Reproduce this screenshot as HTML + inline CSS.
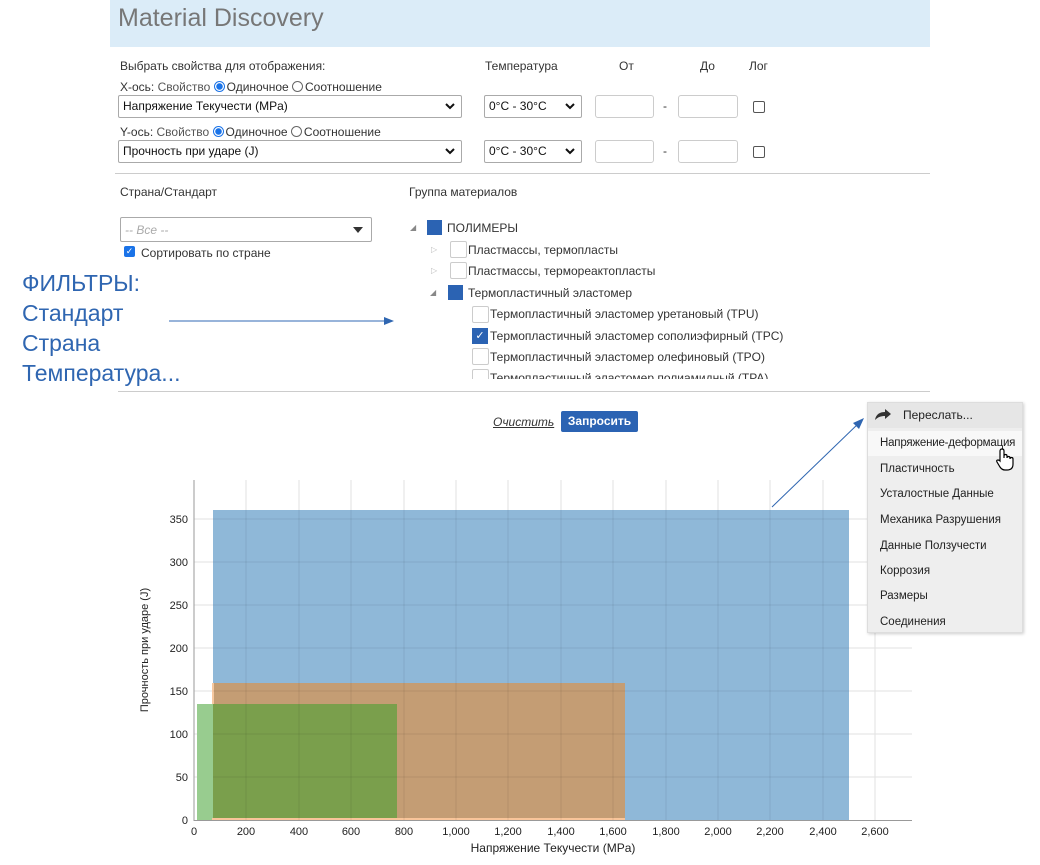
<!DOCTYPE html>
<html><head><meta charset="utf-8">
<style>
*{box-sizing:border-box;margin:0;padding:0}
body{width:1040px;height:865px;background:#fff;position:relative;overflow:hidden;font-family:"Liberation Sans","DejaVu Sans",sans-serif;color:#333;font-size:12px}
.a{position:absolute;white-space:nowrap}
.sel{position:absolute;border:1px solid #aaa;border-radius:2px;background:#fff;font-size:12px;color:#111;padding:3px 4px;height:23px}
.sel svg{position:absolute;right:6px;top:7px}
.inp{position:absolute;border:1px solid #ccc;border-radius:3px;background:#fff;height:23px}
.cb{position:absolute;width:12px;height:12px;border:1px solid #555;border-radius:2px;background:#fff}
.radio{display:inline-block;width:11px;height:11px;border-radius:50%;border:1px solid #666;vertical-align:-1px;margin-right:2px}
.radio.on{border:1px solid #1a73e8;background:radial-gradient(circle,#1a73e8 0 3px,#fff 3.5px)}
.tb{position:absolute;width:17px;height:17px;border:1px solid #ccc;border-radius:2px;background:#fff}
.tbf{position:absolute;width:15px;height:15px;background:#2b63b3}
.tri{position:absolute;font-size:8px;color:#888}
.mi{position:absolute;left:880px;font-size:11.5px;color:#222}
.blue{color:#2f66b1;font-size:23px}
</style></head><body>
<div class="a" style="left:110px;top:0;width:820px;height:47px;background:#dbecf8"></div>
<div class="a" style="left:118px;top:4px;font-size:25px;color:#777">Material Discovery</div>

<div class="a" style="left:120px;top:59px;color:#333">Выбрать свойства для отображения:</div>
<div class="a" style="left:485px;top:59px">Температура</div>
<div class="a" style="left:619px;top:59px">От</div>
<div class="a" style="left:700px;top:59px">До</div>
<div class="a" style="left:749px;top:59px">Лог</div>

<div class="a" style="left:120px;top:80px">X-ось: <span style="color:#555">Свойство</span> <span class="radio on"></span>Одиночное <span class="radio"></span>Соотношение</div>
<div class="sel" style="left:118px;top:95px;width:344px">Напряжение Текучести (MPa)<svg width="10" height="7"><path d="M1 1 L5 5 L9 1" stroke="#111" stroke-width="2" fill="none"/></svg></div>
<div class="sel" style="left:484px;top:95px;width:98px">0°C - 30°C<svg width="10" height="7"><path d="M1 1 L5 5 L9 1" stroke="#111" stroke-width="2" fill="none"/></svg></div>
<div class="inp" style="left:595px;top:95px;width:59px"></div>
<div class="a" style="left:663px;top:99px">-</div>
<div class="inp" style="left:678px;top:95px;width:60px"></div>
<div class="cb" style="left:753px;top:101px"></div>

<div class="a" style="left:120px;top:125px">Y-ось: <span style="color:#555">Свойство</span> <span class="radio on"></span>Одиночное <span class="radio"></span>Соотношение</div>
<div class="sel" style="left:118px;top:140px;width:344px">Прочность при ударе (J)<svg width="10" height="7"><path d="M1 1 L5 5 L9 1" stroke="#111" stroke-width="2" fill="none"/></svg></div>
<div class="sel" style="left:484px;top:140px;width:98px">0°C - 30°C<svg width="10" height="7"><path d="M1 1 L5 5 L9 1" stroke="#111" stroke-width="2" fill="none"/></svg></div>
<div class="inp" style="left:595px;top:140px;width:59px"></div>
<div class="a" style="left:663px;top:144px">-</div>
<div class="inp" style="left:678px;top:140px;width:60px"></div>
<div class="cb" style="left:753px;top:146px"></div>

<div class="a" style="left:115px;top:173px;width:815px;height:1px;background:#ccc"></div>
<div class="a" style="left:120px;top:185px">Страна/Стандарт</div>
<div class="a" style="left:409px;top:185px">Группа материалов</div>

<div class="sel" style="left:120px;top:217px;width:252px;height:25px;color:#aaa;font-style:italic;padding-top:5px">-- Все --<span style="position:absolute;right:8px;top:9px;width:0;height:0;border-left:5px solid transparent;border-right:5px solid transparent;border-top:6px solid #333"></span></div>
<div class="a" style="left:124px;top:246px;width:11px;height:11px;background:#1a73e8;border-radius:2px;color:#fff;font-size:9px;line-height:11px;text-align:center">✓</div>
<div class="a" style="left:141px;top:246px">Сортировать по стране</div>

<div class="a blue" style="left:22px;top:270px">ФИЛЬТРЫ:</div>
<div class="a blue" style="left:22px;top:300px">Стандарт</div>
<div class="a blue" style="left:22px;top:330px">Страна</div>
<div class="a blue" style="left:22px;top:360px">Температура...</div>

<div class="tri" style="left:410px;top:223px">◢</div>
<div class="tbf" style="left:427px;top:220px"></div>
<div class="a" style="left:447px;top:221px">ПОЛИМЕРЫ</div>
<div class="tri" style="left:431px;top:245px;color:#bbb">▷</div>
<div class="tb" style="left:450px;top:241px"></div>
<div class="a" style="left:468px;top:243px">Пластмассы, термопласты</div>
<div class="tri" style="left:431px;top:266px;color:#bbb">▷</div>
<div class="tb" style="left:450px;top:262px"></div>
<div class="a" style="left:468px;top:264px">Пластмассы, термореактопласты</div>
<div class="tri" style="left:430px;top:288px">◢</div>
<div class="tbf" style="left:448px;top:285px"></div>
<div class="a" style="left:468px;top:286px">Термопластичный эластомер</div>
<div class="tb" style="left:472px;top:306px"></div>
<div class="a" style="left:490px;top:307px">Термопластичный эластомер уретановый (TPU)</div>
<div class="a" style="left:472px;top:328px;width:16px;height:16px;background:#2b63b3;color:#fff;font-size:11px;text-align:center;line-height:16px">✓</div>
<div class="a" style="left:490px;top:329px">Термопластичный эластомер сополиэфирный (TPC)</div>
<div class="tb" style="left:472px;top:348px"></div>
<div class="a" style="left:490px;top:350px">Термопластичный эластомер олефиновый (TPO)</div>
<div class="a" style="left:472px;top:369px;height:10px;overflow:hidden;width:330px"><span class="tb" style="left:0;top:0;position:absolute"></span><span style="position:absolute;left:18px;top:2px">Термопластичный эластомер полиамидный (TPA)</span></div>

<div class="a" style="left:118px;top:391px;width:812px;height:1px;background:#ccc"></div>
<div class="a" style="left:493px;top:415px;font-style:italic;text-decoration:underline;color:#333">Очистить</div>
<div class="a" style="left:561px;top:411px;width:77px;height:21px;background:#2b63b3;color:#fff;font-weight:bold;font-size:12px;text-align:center;line-height:21px;border-radius:2px">Запросить</div>

<svg class="a" style="left:0;top:0" width="1040" height="865">
<line x1="169" y1="321" x2="386" y2="321" stroke="#5a86c4" stroke-width="1.2"/>
<polygon points="394,321 384,317 384,325" fill="#2f66b1"/>
<g stroke="#e2e2e2" stroke-width="1">
<line x1="246" y1="480" x2="246" y2="820"/><line x1="299" y1="480" x2="299" y2="820"/><line x1="351" y1="480" x2="351" y2="820"/><line x1="404" y1="480" x2="404" y2="820"/><line x1="456" y1="480" x2="456" y2="820"/><line x1="508" y1="480" x2="508" y2="820"/><line x1="561" y1="480" x2="561" y2="820"/><line x1="613" y1="480" x2="613" y2="820"/><line x1="666" y1="480" x2="666" y2="820"/><line x1="718" y1="480" x2="718" y2="820"/><line x1="770" y1="480" x2="770" y2="820"/><line x1="823" y1="480" x2="823" y2="820"/><line x1="875" y1="480" x2="875" y2="820"/>
<line x1="194" y1="519" x2="912" y2="519"/><line x1="194" y1="562" x2="912" y2="562"/><line x1="194" y1="605" x2="912" y2="605"/><line x1="194" y1="648" x2="912" y2="648"/><line x1="194" y1="691" x2="912" y2="691"/><line x1="194" y1="734" x2="912" y2="734"/><line x1="194" y1="777" x2="912" y2="777"/>
</g>
<rect x="213" y="510" width="636" height="310" fill="#8fb8d8"/>
<rect x="212" y="683" width="413" height="137" fill="#c49d74"/>
<rect x="212" y="683" width="2" height="137" fill="#f6c8a0"/>
<rect x="197" y="704" width="16" height="116" fill="#98cc8f"/>
<rect x="213" y="704" width="184" height="116" fill="#7a9f4c"/>
<rect x="212" y="818" width="413" height="3" fill="#f9c59a"/>
<g stroke="#000" stroke-opacity="0.08"><line x1="246" y1="510" x2="246" y2="820"/><line x1="299" y1="510" x2="299" y2="820"/><line x1="351" y1="510" x2="351" y2="820"/><line x1="404" y1="510" x2="404" y2="820"/><line x1="456" y1="510" x2="456" y2="820"/><line x1="508" y1="510" x2="508" y2="820"/><line x1="561" y1="510" x2="561" y2="820"/><line x1="613" y1="510" x2="613" y2="820"/><line x1="666" y1="510" x2="666" y2="820"/><line x1="718" y1="510" x2="718" y2="820"/><line x1="770" y1="510" x2="770" y2="820"/><line x1="823" y1="510" x2="823" y2="820"/>
<line x1="213" y1="519" x2="849" y2="519"/><line x1="213" y1="562" x2="849" y2="562"/><line x1="213" y1="605" x2="849" y2="605"/><line x1="213" y1="648" x2="849" y2="648"/><line x1="213" y1="691" x2="849" y2="691"/><line x1="213" y1="734" x2="849" y2="734"/><line x1="213" y1="777" x2="849" y2="777"/></g>
<line x1="194" y1="480" x2="194" y2="821" stroke="#999"/>
<line x1="194" y1="820.5" x2="912" y2="820.5" stroke="#999"/>
<g font-size="11" fill="#222" text-anchor="end" font-family="Liberation Sans, sans-serif">
<text x="188" y="523">350</text><text x="188" y="566">300</text><text x="188" y="609">250</text><text x="188" y="652">200</text><text x="188" y="695">150</text><text x="188" y="738">100</text><text x="188" y="781">50</text><text x="188" y="824">0</text></g>
<g font-size="11" fill="#222" text-anchor="middle" font-family="Liberation Sans, sans-serif">
<text x="194" y="835">0</text><text x="246" y="835">200</text><text x="299" y="835">400</text><text x="351" y="835">600</text><text x="404" y="835">800</text><text x="456" y="835">1,000</text><text x="508" y="835">1,200</text><text x="561" y="835">1,400</text><text x="613" y="835">1,600</text><text x="666" y="835">1,800</text><text x="718" y="835">2,000</text><text x="770" y="835">2,200</text><text x="823" y="835">2,400</text><text x="875" y="835">2,600</text>
<text x="553" y="852" font-size="12">Напряжение Текучести (MPa)</text>
<text transform="translate(148,650) rotate(-90)" font-size="11">Прочность при ударе (J)</text>
</g>
<line x1="772" y1="507" x2="860" y2="422" stroke="#2f66b1" stroke-width="1"/>
<polygon points="864,418 853,423 859,429" fill="#2f66b1"/>
</svg>

<div class="a" style="left:867px;top:402px;width:156px;height:231px;background:#eeeeee;border:1px solid #ddd;box-shadow:1px 1px 3px rgba(0,0,0,.2)"></div>
<div class="a" style="left:868px;top:403px;width:154px;height:25px;background:#e6e6e6"></div>
<div class="a" style="left:868px;top:431px;width:154px;height:25px;background:#f8f8f8"></div>
<svg class="a" style="left:874px;top:408px" width="18" height="14"><path d="M1 12 C2 6 6 4 11 4 L11 1 L17 6 L11 11 L11 8 C7 8 4 9 1 12Z" fill="#333"/></svg>
<div class="a" style="left:903px;top:408px;font-size:12px;color:#222">Переслать...</div>
<div class="mi" style="top:437px;letter-spacing:-0.2px">Напряжение-деформация</div>
<div class="mi" style="top:463px">Пластичность</div>
<div class="mi" style="top:488px">Усталостные Данные</div>
<div class="mi" style="top:514px">Механика Разрушения</div>
<div class="mi" style="top:540px">Данные Ползучести</div>
<div class="mi" style="top:565px">Коррозия</div>
<div class="mi" style="top:590px">Размеры</div>
<div class="mi" style="top:616px">Соединения</div>
<svg class="a" style="left:995px;top:448px" width="20" height="24"><path d="M5 13 L5 3 Q5 1 7 1 Q9 1 9 3 L9 10 L9 8 Q9 6.5 10.5 6.5 Q12 6.5 12 8 L12 10 Q12 8.5 13.5 8.5 Q15 8.5 15 10 L15 11 Q15 9.5 16.5 9.5 Q18 9.5 18 11 L18 16 Q18 22 12 22 L10 22 Q7 22 5 19 L2 14 Q1 12 3 12 Q4 12 5 13Z" fill="#fff" stroke="#000" stroke-width="1.2"/></svg>
</body></html>
